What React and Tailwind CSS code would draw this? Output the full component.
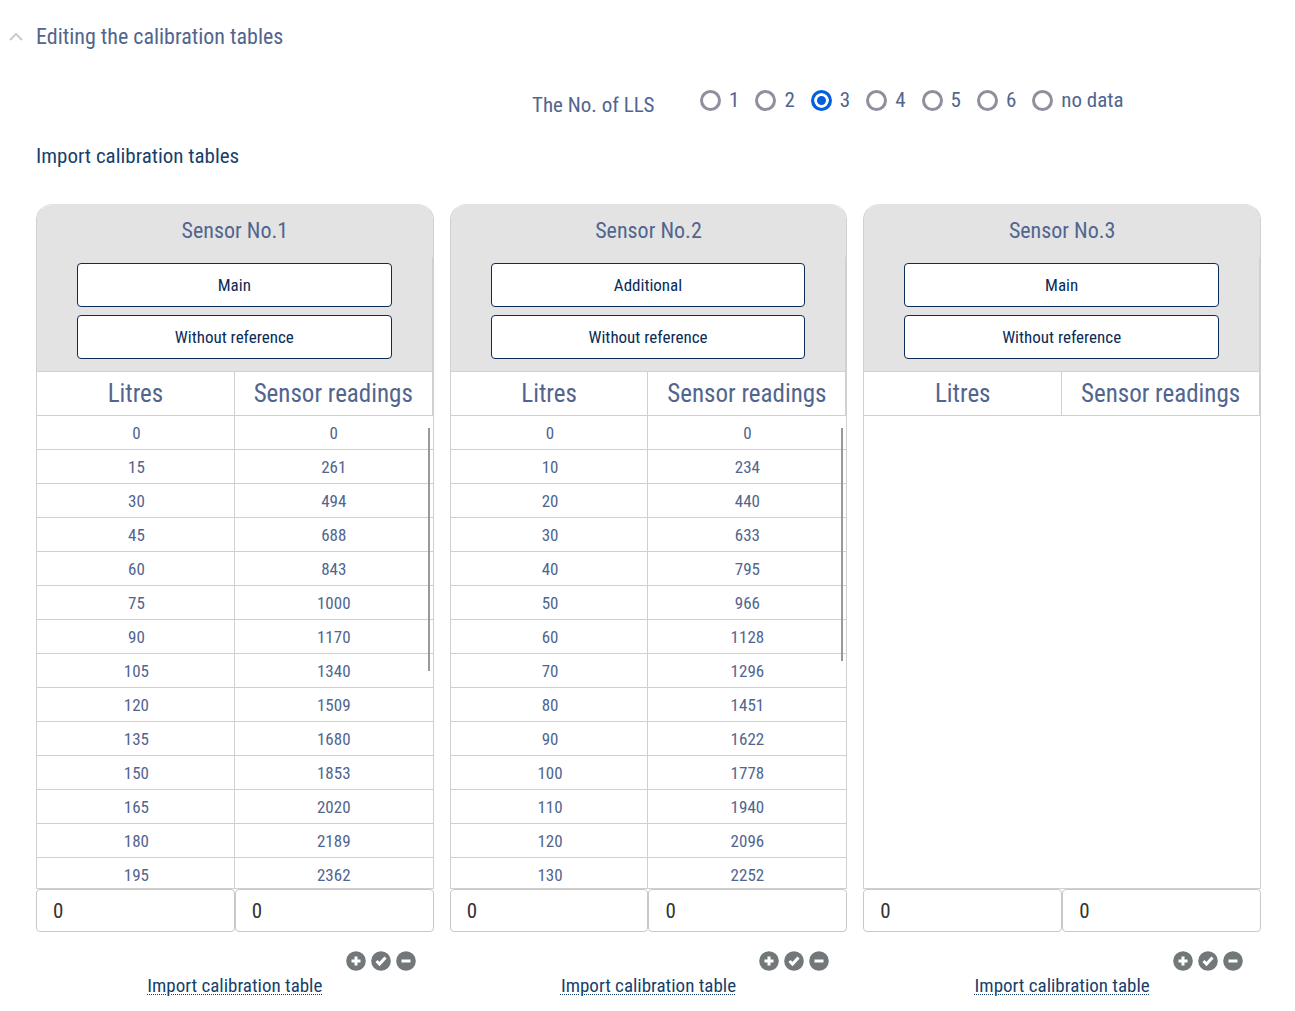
import { useState } from "react";

const sensors = [
  {
    id: 1,
    kind: "Main",
    thumb: "h-[243px]",
    rows: [
      [0, 0], [15, 261], [30, 494], [45, 688], [60, 843], [75, 1000], [90, 1170],
      [105, 1340], [120, 1509], [135, 1680], [150, 1853], [165, 2020], [180, 2189], [195, 2362],
    ],
  },
  {
    id: 2,
    kind: "Additional",
    thumb: "h-[233px]",
    rows: [
      [0, 0], [10, 234], [20, 440], [30, 633], [40, 795], [50, 966], [60, 1128],
      [70, 1296], [80, 1451], [90, 1622], [100, 1778], [110, 1940], [120, 2096], [130, 2252],
    ],
  },
  { id: 3, kind: "Main", thumb: "", rows: [] },
];

const actions = [
  { name: "Add row", d: "M10 5.5v9M5.5 10h9" },
  { name: "Apply", d: "M5.5 10l3 3 6-6.5" },
  { name: "Remove row", d: "M5.5 10h9" },
];

function ChoiceButton({ children }) {
  return (
    <button
      type="button"
      className="h-11 w-full rounded border border-[#0a2c58] bg-white pt-0.5 text-[17px] text-[#0a2c58]"
    >
      {children}
    </button>
  );
}

function ValueInput({ label }) {
  return (
    <input
      type="text"
      aria-label={label}
      defaultValue="0"
      className="h-[43px] w-full min-w-0 rounded border border-[#c8c8c8] bg-white px-4 text-[21px] text-[#333]"
    />
  );
}

function SensorCard({ sensor }) {
  return (
    <section className="min-w-0">
      <div className="relative rounded-t-2xl border border-[#d0d0d0] border-t-[#e3e3e3]">
        <div className="rounded-t-[15px] bg-[#e3e3e3]">
          <h2 className="pt-2.5 pb-2.5 text-center text-[22px] leading-8">Sensor No.{sensor.id}</h2>
          <div className="flex flex-col gap-2 border-r border-[#d0d0d0] px-10 pt-1.5 pb-3">
            <ChoiceButton>{sensor.kind}</ChoiceButton>
            <ChoiceButton>Without reference</ChoiceButton>
          </div>
        </div>
        <div className="h-[517px] overflow-hidden">
          <table className="w-full table-fixed border-separate border-spacing-0 text-center">
            <thead>
              <tr className="h-[45px]">
                <th className="border-y border-r border-[#d0d0d0] p-0 text-[25px] leading-8 font-normal">Litres</th>
                <th className="border-y border-r border-[#d0d0d0] p-0 text-[25px] leading-8 font-normal whitespace-nowrap">
                  Sensor readings
                </th>
              </tr>
            </thead>
            <tbody>
              {sensor.rows.map(([litres, reading]) => (
                <tr key={litres} className="h-[34px]">
                  <td className="border-r border-b border-[#d0d0d0] p-0 pl-0.5 text-[17px] leading-6">{litres}</td>
                  <td className="border-b border-[#d0d0d0] p-0 text-[17px] leading-6">{reading}</td>
                </tr>
              ))}
            </tbody>
          </table>
        </div>
        {sensor.thumb && (
          <div className={`absolute top-[223px] right-[3px] w-0.5 bg-[#999] ${sensor.thumb}`} />
        )}
      </div>
      <div className="grid grid-cols-2">
        <ValueInput label={`Litres, sensor ${sensor.id}`} />
        <ValueInput label={`Reading, sensor ${sensor.id}`} />
      </div>
      <div className="mt-[19px] flex justify-end gap-[5px] pr-[18px]">
        {actions.map((a) => (
          <button key={a.name} type="button" aria-label={a.name} className="size-5">
            <svg viewBox="0 0 20 20" className="size-5" fill="none">
              <circle cx="10" cy="10" r="9.8" fill="#727879" />
              <path d={a.d} stroke="#fff" strokeWidth="3" />
            </svg>
          </button>
        ))}
      </div>
      <div className="text-center text-[19px] leading-[30px]">
        <a
          href="#import"
          className="text-[#173f6b] underline decoration-dotted decoration-1 underline-offset-2"
        >
          Import calibration table
        </a>
      </div>
    </section>
  );
}

export default function App() {
  const [count, setCount] = useState("3");
  return (
    <main className="min-h-screen bg-white pt-[21px] pr-[34px] pb-2.5 pl-9 font-['Roboto_Condensed','Roboto',sans-serif] text-[#51658e]">
      <h1 className="relative text-[22px] leading-8">
        <button type="button" aria-label="Collapse section" className="absolute top-2.5 -left-7 h-3 w-4">
          <svg viewBox="0 0 16 12" className="h-3 w-4" fill="none">
            <path d="M2 9l6-6 6 6" stroke="#ccc" strokeWidth="2" />
          </svg>
        </button>
        Editing the calibration tables
      </h1>

      <fieldset className="mt-[31px] flex items-start pl-[496px] text-[21px] leading-8">
        <legend className="contents">
          <span className="mt-[5px] w-[168px] shrink-0">The No. of LLS</span>
        </legend>
        <div className="flex gap-4">
          {["1", "2", "3", "4", "5", "6", "no data"].map((v) => (
            <label key={v} className="flex items-center gap-2 whitespace-nowrap">
              <input
                type="radio"
                name="lls"
                value={v}
                checked={count === v}
                onChange={() => setCount(v)}
                className="size-[21px] appearance-none rounded-full border-3 border-[#8f8f9d] bg-white checked:border-[#0060df] checked:bg-[#0060df] checked:shadow-[inset_0_0_0_3px_#fff]"
              />
              {v}
            </label>
          ))}
        </div>
      </fieldset>

      <div className="mt-[19px] text-[21px] leading-8">
        <a href="#import-all" className="text-[#173f6b]">
          Import calibration tables
        </a>
      </div>

      <div className="mt-8 grid grid-cols-3 gap-4">
        {sensors.map((s) => (
          <SensorCard key={s.id} sensor={s} />
        ))}
      </div>
    </main>
  );
}
